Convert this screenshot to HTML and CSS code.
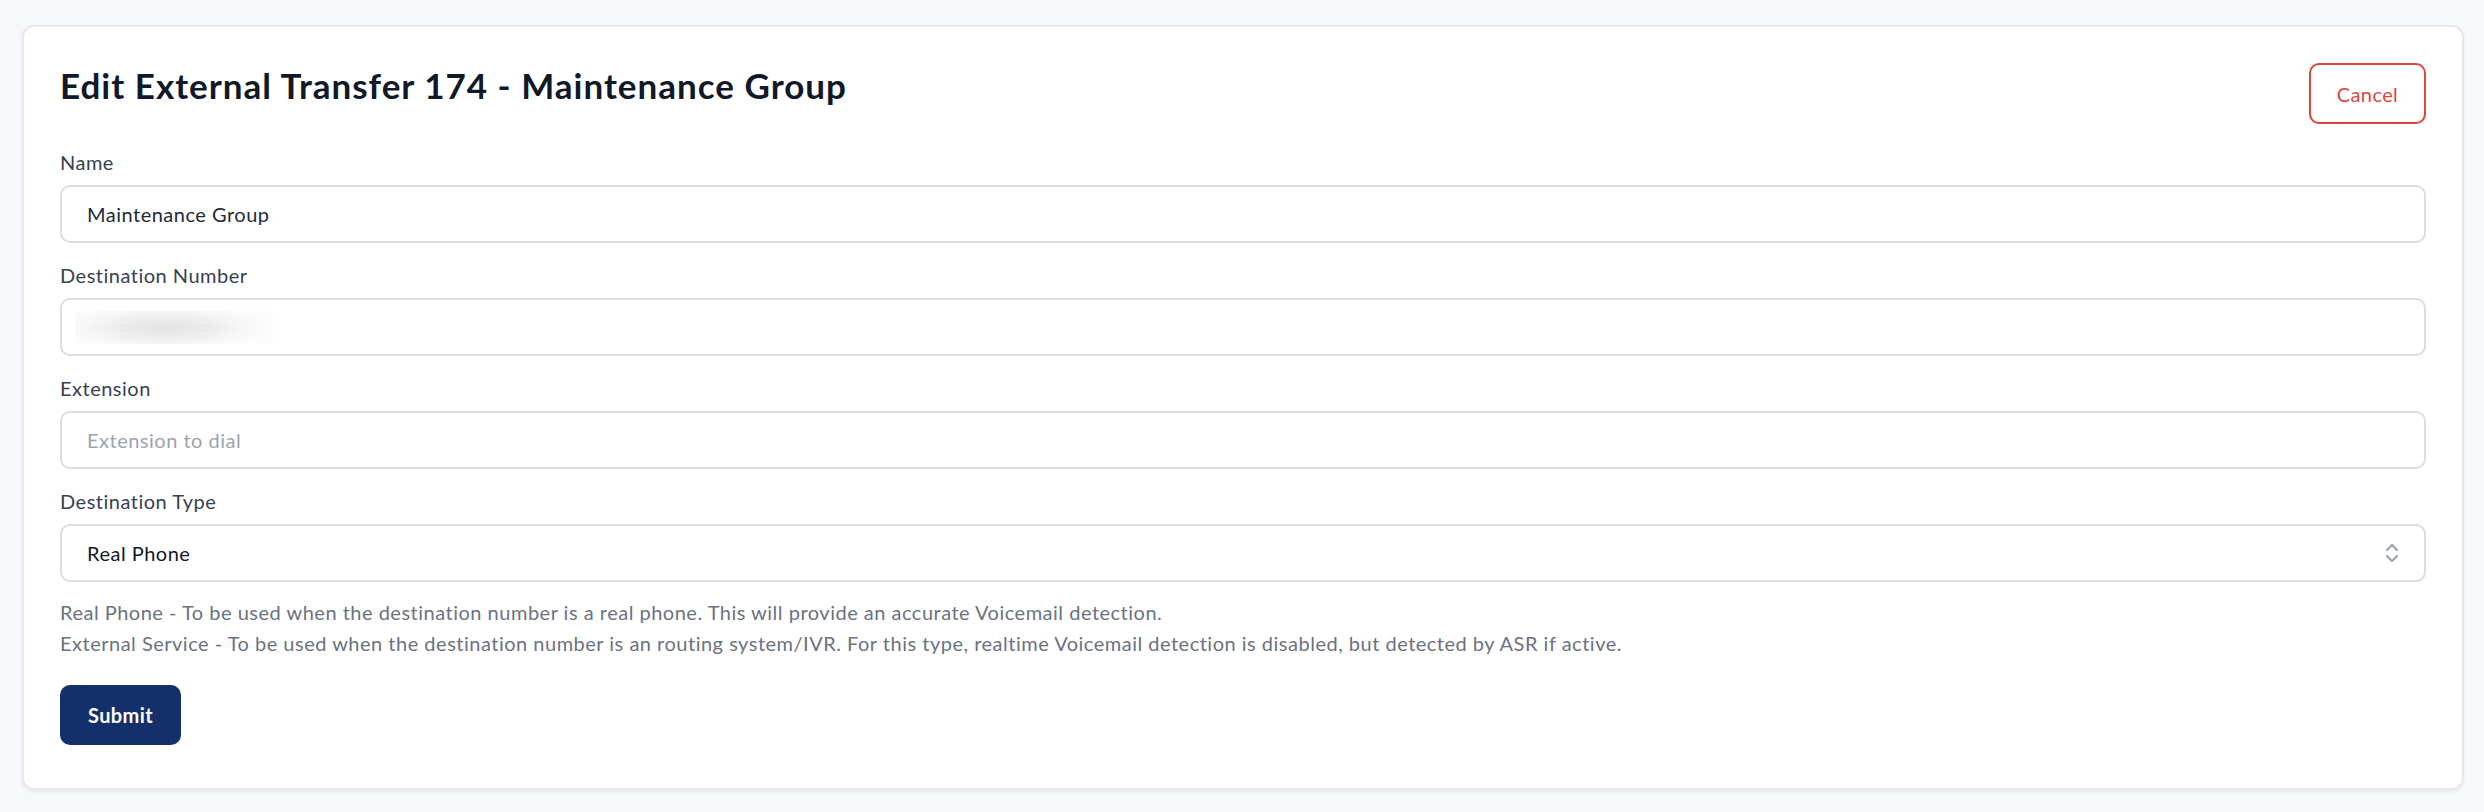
FILE: index.html
```html
<!DOCTYPE html>
<html lang="en">
<head>
<meta charset="utf-8">
<title>Edit External Transfer</title>
<link rel="stylesheet" href="styles.css">
</head>
<body>
<main class="page">
  <section class="card">
    <header class="card-header">
      <h1 class="title">Edit External Transfer 174 - Maintenance Group</h1>
      <button class="btn btn-cancel" type="button">Cancel</button>
    </header>
    <form class="form">
      <div class="field">
        <label class="label">Name</label>
        <div class="control"><span class="value">Maintenance Group</span></div>
      </div>
      <div class="field">
        <label class="label">Destination Number</label>
        <div class="control"><span class="blurred"></span></div>
      </div>
      <div class="field">
        <label class="label">Extension</label>
        <div class="control"><span class="placeholder">Extension to dial</span></div>
      </div>
      <div class="field">
        <label class="label">Destination Type</label>
        <div class="control control-select">
          <span class="value value-select">Real Phone</span>
          <svg class="chevrons" viewBox="0 0 16 24" width="16" height="24" aria-hidden="true">
            <path d="M3 9 L8 4 L13 9" fill="none" stroke="#9ca3af" stroke-width="2.2" stroke-linecap="round" stroke-linejoin="round"/>
            <path d="M3 15 L8 20 L13 15" fill="none" stroke="#9ca3af" stroke-width="2.2" stroke-linecap="round" stroke-linejoin="round"/>
          </svg>
        </div>
        <div class="help">
          <p>Real Phone - To be used when the destination number is a real phone. This will provide an accurate Voicemail detection.</p>
          <p>External Service - To be used when the destination number is an routing system/IVR. For this type, realtime Voicemail detection is disabled, but detected by ASR if active.</p>
        </div>
      </div>
      <div class="actions">
        <button class="btn btn-submit" type="button">Submit</button>
      </div>
    </form>
  </section>
</main>
</body>
</html>
```
FILE: styles.css
```css
* { box-sizing: border-box; }
html, body {
  margin: 0;
  padding: 0;
  background: #f7f8fb;
  font-family: "Lato", "Noto Sans", sans-serif;
}
.page {
  padding: 25px 20px 25px 22px;
}
.card {
  background: #ffffff;
  border: 2px solid #e7e8ec;
  border-radius: 12px;
  box-shadow: 0 2px 4px rgba(0, 0, 0, 0.06);
  padding: 36px 36px 43px 36px;
}
.card-header {
  display: flex;
  justify-content: space-between;
  align-items: flex-start;
}
.title {
  margin: 2px 0 0 0;
  font-size: 35px;
  line-height: 40px;
  font-weight: 700;
  color: #111827;
  letter-spacing: 1px;
}
.btn {
  font-family: inherit;
  cursor: pointer;
  border-radius: 10px;
  height: 61px;
  font-size: 20px;
  letter-spacing: 0.4px;
}
.btn-cancel {
  background: #ffffff;
  border: 2px solid #d9473f;
  color: #d9473f;
  padding: 0;
  width: 117px;
}
.form {
  display: flex;
  flex-direction: column;
  margin-top: 25px;
}
.field {
  display: flex;
  flex-direction: column;
  margin-bottom: 19px;
}
.label {
  font-size: 20px;
  line-height: 26px;
  letter-spacing: 0.5px;
  color: #374151;
  margin-bottom: 10px;
}
.control {
  height: 58px;
  border: 2px solid #d9dce2;
  border-radius: 10px;
  display: flex;
  align-items: center;
  padding: 0 25px;
  background: #ffffff;
}
.value {
  font-size: 20px;
  letter-spacing: 0.5px;
  color: #1f2937;
}
.value-select {
  color: #111827;
}
.placeholder {
  font-size: 20px;
  letter-spacing: 0.5px;
  color: #9ca3af;
}
.blurred {
  display: block;
  width: 197px;
  height: 33px;
  margin-left: -11px;
  background: radial-gradient(ellipse 55% 70% at 45% 50%, #e3e3e3 0%, #ececec 40%, #f7f7f7 75%, #fcfcfc 100%);
}
.control-select {
  justify-content: space-between;
  padding-right: 24px;
}
.chevrons {
  display: block;
}
.help {
  margin-top: 15px;
  color: #6b7280;
  font-size: 20px;
  letter-spacing: 0.5px;
  line-height: 31px;
}
.help p {
  margin: 0;
}
.actions {
  display: flex;
  margin-top: 7px;
}
.btn-submit {
  background: #13306a;
  border: none;
  color: #ffffff;
  font-weight: 700;
  width: 121px;
  height: 60px;
  padding: 0;
}
```
